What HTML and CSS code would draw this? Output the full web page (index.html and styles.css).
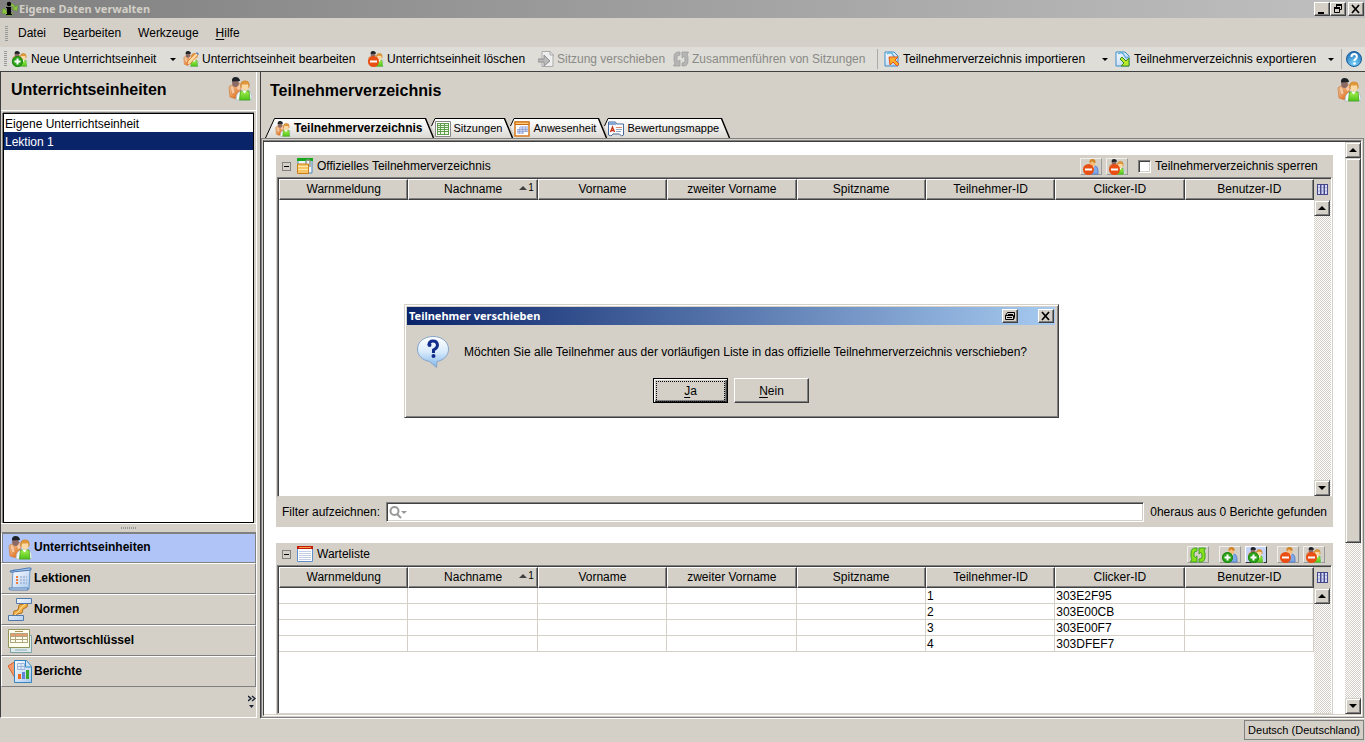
FILE: index.html
```html
<!DOCTYPE html>
<html lang="de">
<head>
<meta charset="utf-8">
<title>Eigene Daten verwalten</title>
<link rel="stylesheet" href="styles.css">
</head>
<body>
<svg class="sprite" aria-hidden="true">
  <defs>
    <linearGradient id="g-orange" x1="0" y1="0" x2="1" y2="1"><stop offset="0" stop-color="#fbd9b0"/><stop offset=".6" stop-color="#e8863a"/><stop offset="1" stop-color="#c45a1a"/></linearGradient>
    <linearGradient id="g-green" x1="0" y1="0" x2="0" y2="1"><stop offset="0" stop-color="#a4ee4c"/><stop offset="1" stop-color="#4fc41a"/></linearGradient>
    <linearGradient id="g-blue" x1="0" y1="0" x2="1" y2="1"><stop offset="0" stop-color="#ffffff"/><stop offset="1" stop-color="#a9c8ee"/></linearGradient>
    <radialGradient id="g-help" cx=".5" cy=".8" r=".8"><stop offset="0" stop-color="#7fd6fa"/><stop offset="1" stop-color="#1a6cb5"/></radialGradient>
    <linearGradient id="g-bubble" x1="0" y1="0" x2="0" y2="1"><stop offset="0" stop-color="#ffffff"/><stop offset=".5" stop-color="#d8eafb"/><stop offset="1" stop-color="#7fb4ea"/></linearGradient>
    <linearGradient id="g-tab" x1="0" y1="0" x2="0" y2="1"><stop offset="0" stop-color="#ffffff"/><stop offset="1" stop-color="#dcdad4"/></linearGradient>
  </defs>
  <symbol id="people" viewBox="0 0 24 24">
    <path d="M1 10q1-2 4-2l7 1 1 12q-5 2-11-1z" fill="url(#g-orange)" stroke="#cc7a3c" stroke-width=".7"/>
    <path d="M2 9q3-2 4 2l1 5-3 1zM8 10l4-4 1 6-3 2z" fill="#f8c9a0" stroke="#cf8550" stroke-width=".6"/>
    <ellipse cx="7.500" cy="6" rx="3.400" ry="4" fill="#8c6a66"/>
    <path d="M4 4.500Q3.500 0 7.500 0T12 4z" fill="#1c2226"/>
    <path d="M8 23q0-8 5-9h7q4 1 4 9z" fill="#f4f8fb" stroke="#a9bcc9" stroke-width=".8"/>
    <path d="M12.500 14h8.500l1 9H11.500z" fill="url(#g-green)" stroke="#45a31d" stroke-width=".8"/>
    <path d="M14 13.500l2.500 3 2.500-3z" fill="#fff"/>
    <path d="M12.500 9.500q-.5-6 4.500-6t4.500 6l-1 1.500h-7z" fill="#cc7f22"/>
    <ellipse cx="17" cy="9.600" rx="3.500" ry="4" fill="#fbd9a5"/>
    <path d="M13 7.500q1-3.500 4-3.500 3 0 4 3-4 .8-8 .5z" fill="#e0993a"/>
  </symbol>
  <symbol id="person" viewBox="0 0 16 16">
    <path d="M5 15V9q0-2 3-2h3q4 0 4 5v3z" fill="#7fa9e8" stroke="#4a76c4" stroke-width=".8"/>
    <path d="M8 7l2 4 1.500-4z" fill="#fff"/>
    <ellipse cx="9.500" cy="4" rx="2.800" ry="3.600" fill="#f6bf80"/>
    <path d="M6.500 4Q6 0 9.500 0T12.500 4q-3-.5-3.500-2-1 2-2.500 2z" fill="#d08427"/>
  </symbol>
  <symbol id="plus" viewBox="0 0 16 16"><circle cx="5.500" cy="10.500" r="5.500" fill="#2fa51b"/><circle cx="5.500" cy="10.500" r="5" fill="none" stroke="#1c7a12" stroke-width=".8"/><path d="M5.500 7.500v6M2.500 10.500h6" stroke="#fff" stroke-width="2"/></symbol>
  <symbol id="minus" viewBox="0 0 16 16"><circle cx="5.500" cy="10.500" r="5.500" fill="#e94e12"/><path d="M2 10.500h7" stroke="#fff" stroke-width="2"/></symbol>
  <symbol id="page" viewBox="0 0 16 16"><path d="M1 1h9l4 4v10H1z" fill="url(#g-blue)" stroke="#3c8cc8"/><path d="M3 3q4-3 6 1t4 2" fill="none" stroke="#5fb0df" stroke-width="1.500"/></symbol>
  <symbol id="refresh" viewBox="0 0 16 16"><path d="M7 1H5.500Q1 1 1 6v3q0 2 1 3l-1.500 3H7V9L5.200 10.500Q4 9.500 4 8V6.500Q4 4 7 4z"/><path d="M9 15h1.500Q15 15 15 10V7q0-2-1-3l1.500-3H9v6l1.800-1.500Q12 6.500 12 8v1.500Q12 12 9 12z"/></symbol>
  <symbol id="columns" viewBox="0 0 11 11"><path d="M0 0h11v11H0z" fill="#44478c"/><path d="M1 1h2v9H1zm3.500 0h2v9h-2zM8 1h2v9H8z" fill="#d9dcf5"/><path d="M1 3.500h2M4.500 3.500h2M8 3.500h2M1 7h2M4.500 7h2M8 7h2" stroke="#9498d0" stroke-width=".7"/></symbol>
</svg>

<header class="titlebar">
  <svg class="i16" viewBox="0 0 16 16"><path d="M5 3Q9 1 12 4l1 2 3-2-1 6-5-2 2-1Q9 3 5 5zM11 13Q6 17 2 12L0 13 1 7l4 3-1 1q3 3 7 1z" fill="#8bc53f" stroke="#5d9427" stroke-width=".5"/><circle cx="7" cy="3" r="2.200"/><path d="M4 6h5v7h1v1H4v-1h1V7H4z"/></svg>
  <h1 class="titlebar-text">Eigene Daten verwalten</h1>
  <div class="window-buttons">
    <button class="winbtn" aria-label="Minimieren"><svg viewBox="0 0 12 10"><path d="M2 8h6v2H2z"/></svg></button>
    <button class="winbtn" aria-label="Wiederherstellen"><svg viewBox="0 0 12 10"><path d="M4.500 1.500h5v4H8M4.500 1v3M2.500 4.500h5v4h-5z" fill="none" stroke="#000"/><path d="M4 0h6v2H4zM2 3h6v2H2z"/></svg></button>
    <button class="winbtn winbtn-close" aria-label="Schließen"><svg viewBox="0 0 12 10"><path d="M2 1l7 8M9 1L2 9" stroke="#000" stroke-width="1.700"/></svg></button>
  </div>
</header>

<nav class="menubar"><span class="grip"></span>
  <button>Datei</button><button>B<u>e</u>arbeiten</button><button>Werkzeuge</button><button><u>H</u>ilfe</button>
</nav>

<div class="toolbar" role="toolbar"><span class="grip"></span>
  <button class="tool tool-menu"><svg class="i16" viewBox="0 0 16 16"><use href="#people"/><use href="#plus"/></svg>Neue Unterrichtseinheit<i class="caret"></i></button>
  <button class="tool"><svg class="i16" viewBox="0 0 16 16"><use href="#people"/><path d="M4 14l1-4 8-8 2 2-8 9z" fill="#ffd9a0" stroke="#d87a2c" stroke-width=".8"/><path d="M13 2l1-1 2 2-1 1z" fill="#5c86d8"/></svg>Unterrichtseinheit bearbeiten</button>
  <button class="tool"><svg class="i16" viewBox="0 0 16 16"><use href="#people"/><use href="#minus"/></svg>Unterrichtseinheit löschen</button>
  <button class="tool" disabled><svg class="i16" viewBox="0 0 16 16"><path d="M4 .5h8l3 3v12H4z" fill="#eee" stroke="#aaa"/><path d="M12 0v4h4" fill="none" stroke="#aaa"/><path d="M0 8h6V4l6 6-6 5v-4H0z" fill="#b9b9b9" stroke="#929292"/></svg>Sitzung verschieben</button>
  <button class="tool" disabled><svg class="i16" viewBox="0 0 16 16" fill="#b5b5b5" stroke="#999" stroke-width=".7"><use href="#refresh"/></svg>Zusammenführen von Sitzungen</button>
  <span class="tool-sep"></span>
  <button class="tool tool-menu"><svg class="i16" viewBox="0 0 16 16"><use href="#page"/><path d="M5 6h9l-3 3 4 4-2 2-4-4-3 3z" fill="#ffae2b" stroke="#e6541a"/></svg>Teilnehmerverzeichnis importieren<i class="caret"></i></button>
  <button class="tool tool-menu"><svg class="i16" viewBox="0 0 16 16"><use href="#page"/><path d="M5 8l2-2 4 4 3-3v8H6l3-3z" fill="#b9e829" stroke="#388c22"/></svg>Teilnehmerverzeichnis exportieren<i class="caret"></i></button>
  <span class="tool-sep"></span>
  <button class="tool-help" aria-label="Hilfe"><svg class="i16" viewBox="0 0 16 16"><circle cx="8" cy="8" r="7.500" fill="url(#g-help)" stroke="#1c5c9c"/><path d="M5.500 6q0-3 2.700-3t2.700 2.500Q10.900 7 8.500 9v1" fill="none" stroke="#fff" stroke-width="2"/><circle cx="8.500" cy="12.500" r="1.200" fill="#fff"/></svg></button>
</div>

<div class="workspace">
  <aside class="sidebar">
    <div class="panel-head"><h2>Unterrichtseinheiten</h2><svg class="i24"><use href="#people"/></svg></div>
    <ul class="unit-list">
      <li><button>Eigene Unterrichtseinheit</button></li>
      <li><button class="selected">Lektion 1</button></li>
    </ul>
    <div class="splitter"><span></span></div>
    <nav class="views">
      <button class="view active"><svg class="i24"><use href="#people"/></svg>Unterrichtseinheiten</button>
      <button class="view"><svg class="i24" viewBox="0 0 24 24"><path d="M5 3h17l-1 19H4z" fill="url(#g-blue)" stroke="#6d9bd0"/><path d="M2 4L20 1h3v2L5 5q-3 1-3-1z" fill="#a8c6ea" stroke="#4b78b4"/><path d="M1 21h19v2H3q-2 0-2-2z" fill="#dfebf8" stroke="#4b78b4"/><path d="M8 10h2M8 13h2M8 16h2" stroke="#f07a3c" stroke-width="2"/><path d="M12 10h7M12 13h7M12 16h7" stroke="#8b9cc4" stroke-dasharray="2 1"/></svg>Lektionen</button>
      <button class="view"><svg class="i24" viewBox="0 0 24 24"><path d="M5 18l1-5 4-1 1-5 4-1 5-3-1 6-4 2-1 4-5 1-1 3z" fill="#f2b24c" stroke="#b5701a"/><path d="M7 17l3-3 4-5 3-3" stroke="#ffe09a" fill="none"/><path d="M8.500.500h15v5h-15zM.5 17.500h15v5H.5z" fill="url(#g-blue)" stroke="#5279a8"/></svg>Normen</button>
      <button class="view"><svg class="i24" viewBox="0 0 24 24"><path d="M2.500 6.500h21v17h-21z" fill="#dce9ea" stroke="#7da3a8"/><path d="M7 21h12" stroke="#8faeb3"/><path d="M.5.500h21v18H.5z" fill="#fffff0" stroke="#93945c"/><path d="M7 2.500h8" stroke="#b09050"/><path d="M2 4h18v3H2z" fill="#e99a70"/><path d="M2 4.500h18M2 7.500h18M2 10.500h18M2 13.500h18M2.500 4v9M7.500 4v9M14.500 4v9M19.500 4v9" stroke="#b2a67e" fill="none"/></svg>Antwortschlüssel</button>
      <button class="view"><svg class="i24" viewBox="0 0 24 24"><path d="M0 6l8-5 4 19-2 3z" fill="#f49a68" stroke="#d6622c"/><path d="M6.500.500h12l5 6v16h-17z" fill="url(#g-blue)" stroke="#3586c0"/><path d="M9.500 3.500h7v6h-7zM13 3v7M9 6.500h8" fill="none" stroke="#9cb7d8"/><path d="M17.500 1v6h6" fill="#cfe3f6" stroke="#3586c0"/><path d="M10 14h3v5h-3z" fill="#f06a1c"/><path d="M14 12h3v7h-3z" fill="#5f86d4"/><path d="M18 10h3v9h-3z" fill="#36a82a"/></svg>Berichte</button>
    </nav>
    <div class="sidebar-foot"><button aria-label="Weitere Schaltflächen"><svg viewBox="0 0 8 14"><path d="M0 1l3 2.500L0 6M4 1l3 2.500L4 6" fill="none" stroke="#1a2233" stroke-width="1.400"/><path d="M1 10h5l-2.500 3z" fill="#1a2233"/></svg></button></div>
  </aside>

  <main class="main">
    <div class="panel-head"><h2>Teilnehmerverzeichnis</h2><svg class="i24"><use href="#people"/></svg></div>
    <div class="tabs" role="tablist">
      <button class="tab" role="tab" aria-selected="true"><svg class="edge-first" viewBox="0 0 10 20"><path d="M10 .5L0 20h10z" fill="url(#g-tab)"/><path d="M10 .5h-.5L.5 20" fill="none" stroke="#000"/></svg><span class="tab-body"><svg class="i16"><use href="#people"/></svg>Teilnehmerverzeichnis</span><svg class="edge-right" viewBox="0 0 9 20"><path d="M0 .5L8.500 20H0z" fill="url(#g-tab)"/><path d="M0 .5h.5L8.500 20" fill="none" stroke="#000" stroke-width="1.400"/></svg></button>
      <button class="tab" role="tab"><svg class="edge-left" viewBox="0 0 4 20"><path d="M4 .5L.5 8 4 18z" fill="url(#g-tab)"/><path d="M4 .5L.5 8" fill="none" stroke="#000"/></svg><span class="tab-body"><svg class="i16" viewBox="0 0 16 16"><path d="M.5.500h15v15H.5z" fill="#fff" stroke="#888"/><path d="M2 2h12v12H2z" fill="#5f9c4c"/><path d="M3 3h2v1H3zm3 0h3v1H6zm4 0h3v1h-3zM3 5h2v1H3zm3 0h3v1H6zm4 0h3v1h-3zM3 7h2v1H3zm3 0h3v1H6zm4 0h3v1h-3zM3 9h2v1H3zm3 0h3v1H6zm4 0h3v1h-3zM3 11h2v2H3zm3 0h3v2H6zm4 0h3v2h-3z" fill="#f0fae8"/></svg>Sitzungen</span><svg class="edge-right" viewBox="0 0 9 20"><path d="M0 .5L8.500 20H0z" fill="url(#g-tab)"/><path d="M0 .5h.5L8.500 20" fill="none" stroke="#000" stroke-width="1.400"/></svg></button>
      <button class="tab" role="tab"><svg class="edge-left" viewBox="0 0 4 20"><path d="M4 .5L.5 8 4 18z" fill="url(#g-tab)"/><path d="M4 .5L.5 8" fill="none" stroke="#000"/></svg><span class="tab-body"><svg class="i16" viewBox="0 0 16 16"><path d="M1 1h14v14H1z" fill="#fff" stroke="#d87a1c" stroke-width="1.500"/><path d="M1 1h14v2.500H1z" fill="#ffc873" stroke="#c96a10"/><path d="M6 5h8v3H6zM3 8h11v3H3zM3 11h7v2H3z" fill="#c5d0ef"/><path d="M3 8.500h11M3 10.500h11M5.500 6v7M8.500 6v7M11.500 6v5" stroke="#8798cc" stroke-width=".6"/></svg>Anwesenheit</span><svg class="edge-right" viewBox="0 0 9 20"><path d="M0 .5L8.500 20H0z" fill="url(#g-tab)"/><path d="M0 .5h.5L8.500 20" fill="none" stroke="#000" stroke-width="1.400"/></svg></button>
      <button class="tab" role="tab"><svg class="edge-left" viewBox="0 0 4 20"><path d="M4 .5L.5 8 4 18z" fill="url(#g-tab)"/><path d="M4 .5L.5 8" fill="none" stroke="#000"/></svg><span class="tab-body"><svg class="i16" viewBox="0 0 16 16"><path d="M.5 14V1h7l1 2h7v11l-2 1-2-2H5l-2 2-2-1z" fill="#fff" stroke="#46699f"/><path d="M1 1h6l1 2v1H1z" fill="#86a6d4"/><path d="M2.500 11l2-5 2 5M3.500 9.500h2" fill="none" stroke="#c83418" stroke-width="1.300"/><path d="M8 6.500h6" stroke="#e08a70"/><path d="M8 8.500h6M8 10.500h5" stroke="#94a8c8"/></svg>Bewertungsmappe</span><svg class="edge-right" viewBox="0 0 9 20"><path d="M0 .5L8.500 20H0z" fill="url(#g-tab)"/><path d="M0 .5h.5L8.500 20" fill="none" stroke="#000" stroke-width="1.400"/></svg></button>
    </div>
    <div class="frame"><div class="frame-inner">
      <div class="sections">
        <section class="section">
          <div class="section-head">
            <button class="collapse" aria-label="Einklappen"></button>
            <svg class="i16" viewBox="0 0 16 16"><path d="M1 1h14v14H1z" fill="#eef4fb" stroke="#4c88b8"/><path d="M0 0h16v3H0z" fill="#16a81c"/><path d="M9 7V4q0-2 2-2t2 2v5" fill="none" stroke="#8f9a8f" stroke-width="1.500"/><path d="M.5 6h11v9.500H.5z" fill="#f7c565" stroke="#c98018"/><path d="M1 8.500h10M1 11.500h10" stroke="#ffe9ae"/></svg>
            <h3>Offizielles Teilnehmerverzeichnis</h3>
            <div class="section-tools">
              <button class="flat" aria-label="Teilnehmer entfernen"><svg class="i16" viewBox="0 0 16 16"><use href="#person"/><use href="#minus"/></svg></button>
              <button class="flat" aria-label="Alle Teilnehmer entfernen"><svg class="i16" viewBox="0 0 16 16"><use href="#people"/><use href="#minus"/></svg></button>
              <label class="lock"><input type="checkbox">Teilnehmerverzeichnis sperren</label>
            </div>
          </div>
          <div class="grid grid-official">
            <div class="grid-data"><table>
              <thead><tr><th>Warnmeldung</th><th>Nachname<span class="sort"><svg viewBox="0 0 8 4"><path d="M0 4l4-4 4 4z" fill="#404040"/></svg>1</span></th><th>Vorname</th><th>zweiter Vorname</th><th>Spitzname</th><th>Teilnehmer-ID</th><th>Clicker-ID</th><th>Benutzer-ID</th></tr></thead>
            </table></div>
            <div class="grid-scroll"><button class="column-picker" aria-label="Spalten"><svg><use href="#columns"/></svg></button><div class="scrollbar"><button class="sb" aria-label="Nach oben"><i class="up"></i></button><button class="sb" aria-label="Nach unten"><i class="down"></i></button></div></div>
          </div>
          <div class="filter"><label for="filter">Filter aufzeichnen:</label>
            <div class="search"><svg viewBox="0 0 18 13"><circle cx="5.500" cy="5" r="4" fill="none" stroke="#999" stroke-width="2"/><path d="M8 8l4 4" stroke="#999" stroke-width="2"/><path d="M12 5h6l-3 3z" fill="#999"/></svg><input id="filter" type="text"></div>
            <span>0heraus aus 0 Berichte gefunden</span></div>
        </section>

        <section class="section section-wait">
          <div class="section-head">
            <button class="collapse" aria-label="Einklappen"></button>
            <svg class="i16" viewBox="0 0 16 16"><path d="M.5.500h15v15H.5z" fill="#fff" stroke="#5d8fce"/><path d="M0 0h16v3H0z" fill="#c41808"/><path d="M2 1.500h12" stroke="#f2a13c"/><path d="M2 5.500h12M2 7.500h12M2 9.500h12M2 11.500h12M2 13.500h12" stroke="#c5cde6"/></svg>
            <h3>Warteliste</h3>
            <div class="section-tools">
              <button class="flat gap-after" aria-label="Aktualisieren"><svg class="i16" viewBox="0 0 16 16" fill="#8be01c" stroke="#2f9a1c" stroke-width=".9"><use href="#refresh"/></svg></button>
              <button class="flat" aria-label="Teilnehmer hinzufügen"><svg class="i16" viewBox="0 0 16 16"><use href="#person"/><use href="#plus"/></svg></button>
              <button class="flat hot gap-after" aria-label="Alle Teilnehmer hinzufügen"><svg class="i16" viewBox="0 0 16 16"><use href="#people"/><use href="#plus"/></svg></button>
              <button class="flat" aria-label="Teilnehmer entfernen"><svg class="i16" viewBox="0 0 16 16"><use href="#person"/><use href="#minus"/></svg></button>
              <button class="flat" aria-label="Alle Teilnehmer entfernen"><svg class="i16" viewBox="0 0 16 16"><use href="#people"/><use href="#minus"/></svg></button>
            </div>
          </div>
          <div class="grid grid-wait">
            <div class="grid-data"><table>
              <thead><tr><th>Warnmeldung</th><th>Nachname<span class="sort"><svg viewBox="0 0 8 4"><path d="M0 4l4-4 4 4z" fill="#404040"/></svg>1</span></th><th>Vorname</th><th>zweiter Vorname</th><th>Spitzname</th><th>Teilnehmer-ID</th><th>Clicker-ID</th><th>Benutzer-ID</th></tr></thead>
              <tbody>
                <tr><td></td><td></td><td></td><td></td><td></td><td>1</td><td>303E2F95</td><td></td></tr>
                <tr><td></td><td></td><td></td><td></td><td></td><td>2</td><td>303E00CB</td><td></td></tr>
                <tr><td></td><td></td><td></td><td></td><td></td><td>3</td><td>303E00F7</td><td></td></tr>
                <tr><td></td><td></td><td></td><td></td><td></td><td>4</td><td>303DFEF7</td><td></td></tr>
              </tbody>
            </table></div>
            <div class="grid-scroll"><button class="column-picker" aria-label="Spalten"><svg><use href="#columns"/></svg></button><div class="scrollbar"><button class="sb" aria-label="Nach oben"><i class="up"></i></button></div></div>
          </div>
        </section>
      </div>
      <div class="scrollbar page-scroll"><button class="sb" aria-label="Nach oben"><i class="up"></i></button><div class="thumb"></div><div class="track"></div><button class="sb" aria-label="Nach unten"><i class="down"></i></button></div>
    </div></div>
  </main>
</div>

<footer class="statusbar"><span>Deutsch (Deutschland)</span></footer>

<div class="dialog" role="dialog" aria-labelledby="dialog-title">
  <div class="dialog-bar"><h2 id="dialog-title">Teilnehmer verschieben</h2>
    <button class="winbtn" aria-label="Fenster"><svg viewBox="0 0 12 10"><path d="M1.500 4.500l2-3h7v5l-1 2h-8zM1.500 4.500h8v4M4 3.500h5M3 6.500h5" fill="none" stroke="#000"/></svg></button>
    <button class="winbtn winbtn-apart" aria-label="Schließen"><svg viewBox="0 0 12 10"><path d="M2 1l7 8M9 1L2 9" stroke="#000" stroke-width="1.700"/></svg></button>
  </div>
  <div class="dialog-body">
    <svg class="bubble" viewBox="0 0 32 32"><path d="M16 .5C7 .5.500 6 .5 13c0 7 5 11 12 12.500l7 6L20 25.500c7-1.500 11.500-6 11.500-12.500C31.500 6 25 .5 16 .5z" fill="url(#g-bubble)" stroke="#86a4c8"/><path d="M12 9Q12 5 16 5t4.500 4Q20.500 12 16.500 14v3" fill="none" stroke="#122c8c" stroke-width="3"/><circle cx="12.500" cy="9" r="2" fill="#122c8c"/><circle cx="16.500" cy="20" r="2" fill="#122c8c"/></svg>
    <p>Möchten Sie alle Teilnehmer aus der vorläufigen Liste in das offizielle Teilnehmerverzeichnis verschieben?</p>
  </div>
  <div class="dialog-actions"><button class="btn btn-default"><span><u>J</u>a</span></button><button class="btn"><span><u>N</u>ein</span></button></div>
</div>
</body>
</html>
```
FILE: styles.css
```css
* { box-sizing: border-box; }
body {
  --face: #d4d0c8;
  --shade: #808080;
  --dark: #404040;
  margin: 0;
  height: 100vh;
  display: flex;
  flex-direction: column;
  overflow: hidden;
  background: var(--face);
  color: #000;
  font: 12px/15px "Liberation Sans", Arial, sans-serif;
}
h1, h2, h3, p, ul { margin: 0; padding: 0; font-size: inherit; font-weight: normal; list-style: none; }
button { margin: 0; padding: 0; border: 0; background: none; font: inherit; color: inherit; text-align: left; white-space: nowrap; }
svg { display: block; flex: none; }
u { text-underline-offset: 2px; }
.sprite { position: absolute; width: 0; height: 0; }
.i16 { width: 16px; height: 16px; }
.i24 { width: 24px; height: 24px; }

/* Window title */
.titlebar { flex: none; height: 18px; display: flex; align-items: center; gap: 1px; padding: 0 1px 0 2px; background: linear-gradient(90deg, #808080, #c0c0c0); }
.titlebar-text { flex: 1; color: var(--face); font: bold 11px/16px "Noto Sans", Tahoma, sans-serif; }
.window-buttons { display: flex; }
.winbtn { width: 16px; height: 14px; padding: 1px; background: var(--face); border: 1px solid; border-color: #fff var(--dark) var(--dark) #fff; box-shadow: inset -1px -1px var(--shade); }
.winbtn svg { width: 12px; height: 10px; }
.winbtn-close { margin-left: 2px; }
.winbtn-apart { margin-left: 20px; }

/* Menu and tool bars */
.grip { flex: none; width: 3px; height: 16px; background: repeating-linear-gradient(#999 0 1px, transparent 1px 2px); }
.menubar { flex: none; height: 29px; display: flex; align-items: center; gap: 17px; padding: 2px 5px 0; }
.menubar .grip { margin-right: -7px; }
.toolbar { flex: none; height: 25px; display: grid; grid-template-columns: 8px 171fr 185fr 170fr 135fr 204fr 7px 231fr 226fr 5px 17px; align-items: center; padding: 0 2px 0 4px; background: #deddd8; border-bottom: 1px solid var(--dark); }
.tool { display: flex; align-items: center; gap: 3px; min-width: 0; }
.tool:disabled { color: #8a8a86; }
.caret { margin-left: auto; border: solid transparent; border-width: 3px 3px 0; border-top-color: #000; }
.tool-menu { padding-right: 7px; }
.tool-sep { height: 20px; border-left: 1px solid #aaa; }

/* Columns */
.workspace { flex: 1; min-height: 0; display: flex; gap: 3px; }
.panel-head { flex: none; display: flex; align-items: center; justify-content: space-between; height: 39px; }
.panel-head h2 { padding-top: 2px; font-weight: bold; font-size: 16px; line-height: 20px; }
.sidebar { flex: none; width: 257px; display: flex; flex-direction: column; border: solid; border-width: 0 1px 1px; border-color: #fff #fff #fff var(--dark); }
.sidebar .panel-head { padding: 0 4px 4px 10px; border-bottom: 1px solid #fff; }
.unit-list { flex: 1; margin: 2px 2px 0; background: #fff; border: 1px solid #000; box-shadow: 0 -1px var(--shade), -1px 0 var(--shade), 1px 1px var(--face); }
.unit-list button { display: block; width: 100%; height: 18px; padding: 2px 1px 0; }
.unit-list .selected { background: #0a246a; color: #fff; }
.splitter { flex: none; height: 9px; display: flex; align-items: center; justify-content: center; border-top: 1px solid #fff; }
.splitter span { width: 16px; height: 2px; background: repeating-linear-gradient(90deg, #999 0 1px, transparent 1px 2px); }
.view { display: flex; align-items: center; gap: 2px; width: 100%; height: 31px; padding: 0 6px; font-weight: bold; border: 1px solid; border-color: #fff var(--shade) var(--shade) #fff; }
.view.active { background: #b0c4f8; border-color: var(--shade) var(--shade) var(--shade) #fff; box-shadow: inset 1px 1px var(--shade); }
.sidebar-foot { flex: none; height: 30px; display: flex; justify-content: flex-end; align-items: center; }
.sidebar-foot svg { width: 8px; height: 14px; }

.main { flex: 1; min-width: 0; display: flex; flex-direction: column; border-left: 1px solid var(--dark); }
.main .panel-head { padding: 0 4px 4px 9px; }

/* Tabs */
.tabs { display: flex; height: 20px; margin: 7px 0 0 4px; }
.tab { display: flex; font-size: 11px; }
.tab[aria-selected="true"] { font-size: 12px; font-weight: bold; }
.tab-body { display: flex; align-items: center; gap: 3px; padding-right: 2px; border-top: 1px solid #000; background: linear-gradient(#fff, #dcdad4); }
.edge-first { width: 10px; height: 20px; }
.edge-left { width: 4px; height: 20px; margin-left: -3px; }
.edge-right { width: 9px; height: 20px; }

/* Content frame */
.frame { flex: 1; min-height: 0; display: flex; margin-right: 1px; padding: 1px; border: 1px solid var(--shade); box-shadow: 0 1px #fff; }
.frame-inner { flex: 1; min-width: 0; display: flex; padding: 1px 0 1px; background: #fff; border: 1px solid; border-color: var(--shade) #fff #fff var(--dark); box-shadow: inset 0 1px var(--dark), inset -1px -1px var(--face); }
.sections { flex: 1; min-width: 0; overflow: hidden; display: flex; flex-direction: column; gap: 16px; padding: 13px 12px 0; }
.section { flex: none; background: var(--face); }
.section-wait { flex: 1; min-height: 0; overflow: hidden; display: flex; flex-direction: column; }
.section-head { flex: none; display: flex; align-items: center; height: 22px; padding: 0 8px 0 6px; }
.section-head h3 { margin-left: 4px; }
.section-head .i16 { margin-left: 6px; }
.collapse { width: 9px; height: 9px; border: 1px solid var(--shade); background: linear-gradient(#000, #000) center / 5px 1px no-repeat; }
.section-tools { margin-left: auto; display: flex; align-items: center; gap: 4px; }
.flat { width: 22px; height: 17px; display: flex; justify-content: center; border: 1px solid; border-color: #f2f0ec #999 #999 #f2f0ec; }
.section-head .flat .i16 { margin: 0; }
.gap-after { margin-right: 6px; }
.flat.hot { background: #c6d3f7; border-color: #fff #333 #333 #fff; }
.lock { display: flex; align-items: center; gap: 4px; min-width: 187px; margin-left: 6px; }
.lock input { appearance: none; width: 13px; height: 13px; margin: 0; background: #fff; border: 1px solid; border-color: var(--shade) #fff #fff var(--shade); box-shadow: inset 1px 1px var(--dark), inset -1px -1px var(--face); }

/* Data grids */
.grid { display: flex; margin: 0 1px; padding: 1px 0 0 1px; background: #fff; border: 1px solid; border-color: var(--shade) #fff var(--face) var(--shade); box-shadow: inset 1px 1px var(--dark); }
.grid-official { height: 320px; }
.grid-wait { flex: 1; min-height: 0; }
.grid-data { flex: 1; min-width: 0; }
table { width: 100%; table-layout: fixed; border-collapse: separate; border-spacing: 0; }
th { position: relative; height: 21px; padding: 0; font-weight: normal; text-align: center; background: var(--face); border: 1px solid; border-color: #fff var(--dark) var(--dark) #fff; box-shadow: inset -1px -1px var(--shade); }
.sort { position: absolute; right: 3px; top: 2px; display: flex; align-items: center; gap: 1px; font-size: 10px; line-height: 12px; }
.sort svg { width: 8px; height: 4px; }
td { height: 16px; padding: 1px 1px 0; line-height: 14px; border: solid var(--face); border-width: 0 1px 1px 0; }
.grid-scroll { flex: none; width: 17px; display: flex; flex-direction: column; background: var(--face); }
.column-picker { display: flex; align-items: center; justify-content: center; height: 21px; flex: none; }
.column-picker svg { width: 11px; height: 11px; }
.scrollbar { flex: 1; display: flex; flex-direction: column; justify-content: space-between; background: repeating-conic-gradient(#fff 0 25%, var(--face) 0 50%) 0 0 / 2px 2px; }
.sb, .thumb { flex: none; width: 16px; height: 16px; display: flex; align-items: center; justify-content: center; background: var(--face); border: 1px solid; border-color: var(--face) var(--dark) var(--dark) var(--face); box-shadow: inset 1px 1px #fff, inset -1px -1px var(--shade); }
.up, .down { border: solid transparent; }
.up { border-width: 0 4px 4px; border-bottom-color: #000; }
.down { border-width: 4px 4px 0; border-top-color: #000; }
.page-scroll { flex: none; width: 16px; }
.thumb { flex: 384 0 0; }
.track { flex: 155 0 0; }

/* Filter row */
.filter { display: flex; align-items: center; gap: 6px; height: 30px; padding: 0 6px; }
.search { flex: 1; display: flex; align-items: center; height: 20px; padding: 0 2px; background: #fff; border: 1px solid; border-color: var(--shade) #fff #fff var(--shade); box-shadow: inset 1px 1px var(--dark), inset -1px -1px var(--face); }
.search svg { width: 18px; height: 13px; }
.search input { flex: 1; min-width: 0; border: 0; padding: 0 4px; background: transparent; font: inherit; outline: 0; }

.statusbar { flex: none; height: 24px; display: flex; justify-content: flex-end; padding: 2px 1px 2px 0; }
.statusbar span { padding: 0 3px; border: 1px solid var(--shade); font-size: 11px; line-height: 18px; }

/* Message window */
.dialog { position: absolute; left: 404px; top: 304px; padding: 2px 3px 14px 2px; background: var(--face); border: 1px solid; border-color: var(--face) var(--dark) var(--dark) var(--face); box-shadow: inset 1px 1px #fff, inset -1px -1px var(--shade); width: 655px; }
.dialog-bar { display: flex; align-items: center; height: 18px; padding: 0 1px 0 2px; background: linear-gradient(90deg, #0a246a, #a6caf0); }
.dialog-bar h2 { flex: 1; color: #fff; font: bold 11px/16px "Noto Sans", Tahoma, sans-serif; }
.dialog-body { display: flex; align-items: center; gap: 15px; padding: 11px 10px 0; }
.bubble { width: 32px; height: 32px; }
.dialog-actions { display: flex; justify-content: center; gap: 6px; margin-top: 10px; }
.btn { width: 75px; height: 25px; padding: 2px; text-align: center; border: 1px solid; border-color: #fff var(--dark) var(--dark) #fff; box-shadow: inset -1px -1px var(--shade); }
.btn span { display: block; padding: 2px 0; border: 1px solid transparent; }
.btn-default { border-color: #000; box-shadow: inset 1px 1px #fff, inset -1px -1px var(--dark), inset -2px -2px var(--shade); }
.btn-default span { border: 1px dotted #000; }
```
